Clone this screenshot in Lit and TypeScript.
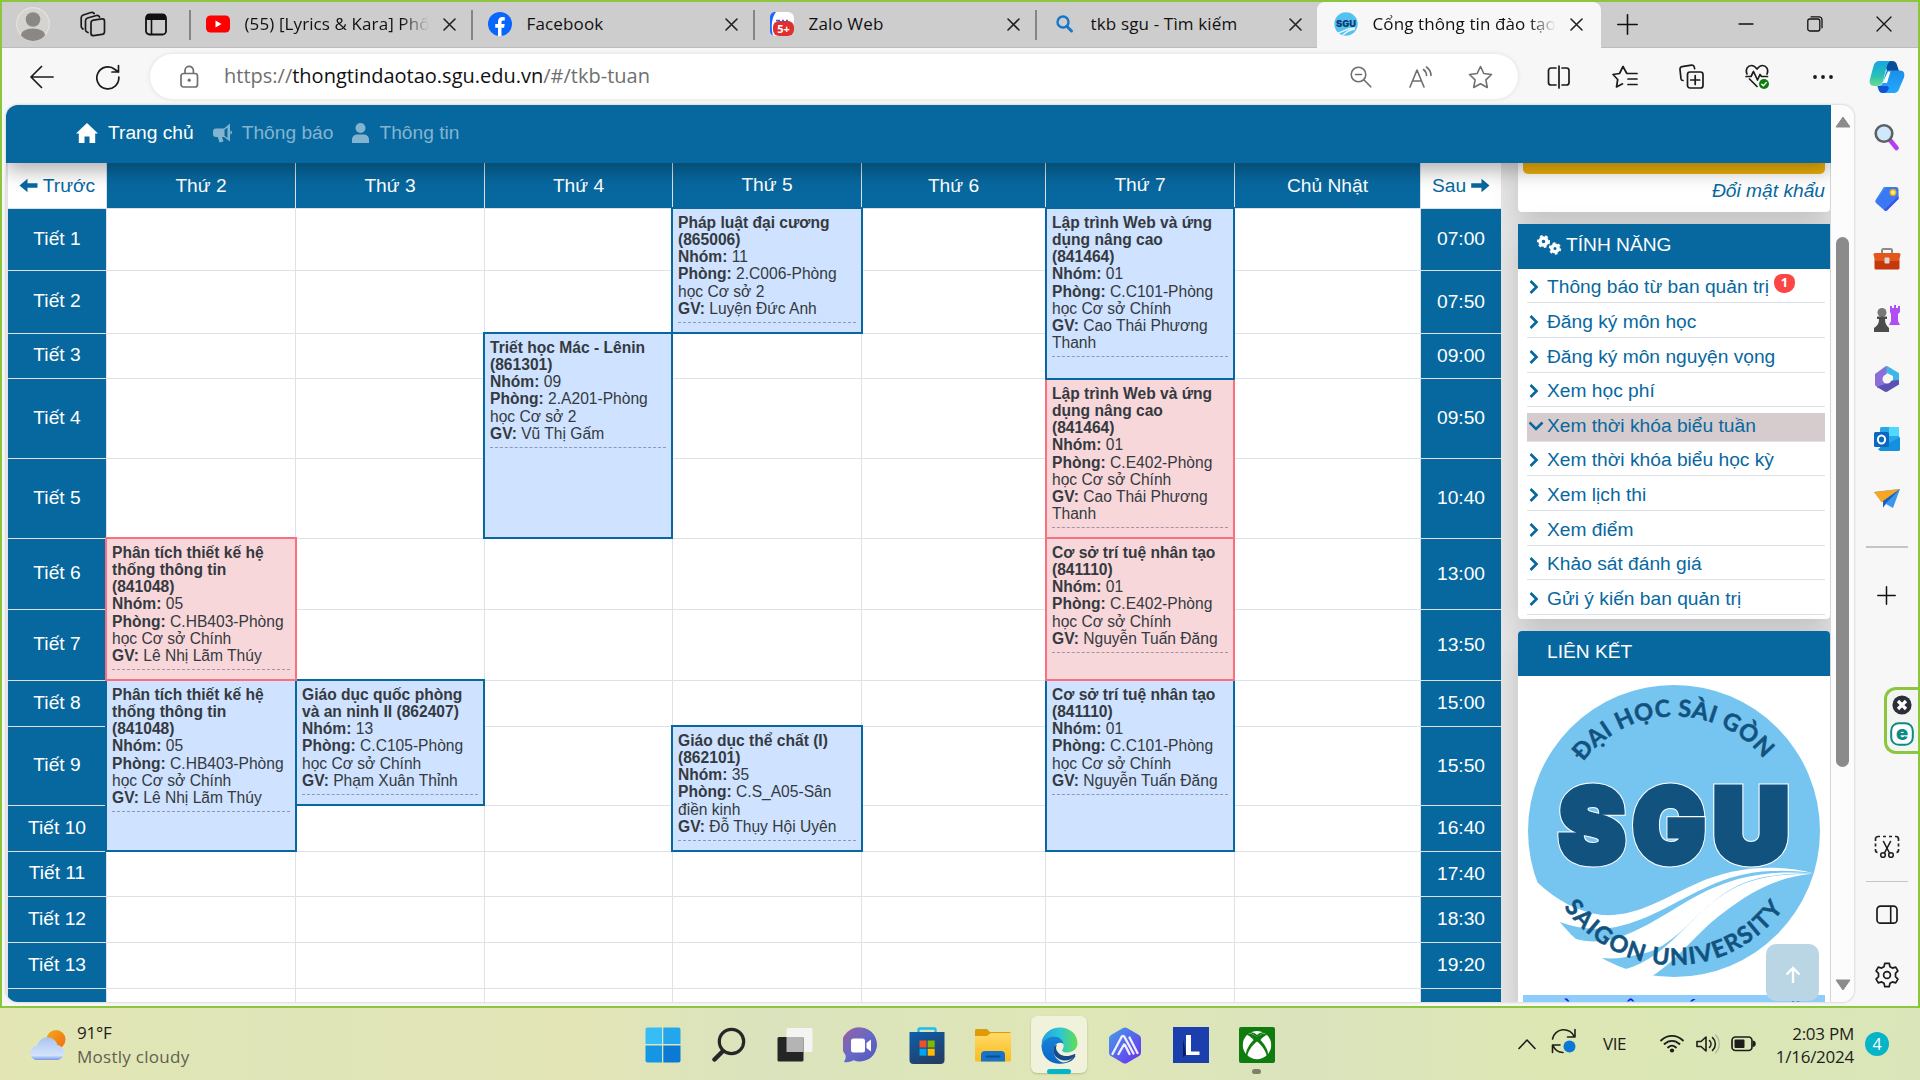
import { LitElement, html, svg, css, nothing } from "lit";
import { customElement } from "lit/decorators.js";
import { classMap } from "lit/directives/class-map.js";
import { styleMap } from "lit/directives/style-map.js";

const icon = (w: number, h: number, body: unknown) =>
  html`<svg width=${w} height=${h} viewBox="0 0 ${w} ${h}" fill="none">${body}</svg>`;
const line = (d: string, c = "#1b1b1b", sw = 1.6) =>
  svg`<path d=${d} stroke=${c} stroke-width=${sw} stroke-linecap="round" stroke-linejoin="round" />`;

const closeIcon = icon(13, 13, line("M1 1L12 12M12 1L1 12", "#222", 1.6));

const favicons: Record<string, unknown> = {
  youtube: icon(24, 24, svg`<rect x="0" y="3.500" width="24" height="17" rx="4.500" fill="#f00"/><path d="M9.500 8.500v7l6-3.500z" fill="#fff"/>`),
  facebook: icon(24, 24, svg`<circle cx="12" cy="12" r="12" fill="#0866ff"/><path d="M10 24v-8.300H7.200v-3.700H10V9.800C10 6.600 11.500 5 14.600 5c.8 0 1.600.1 2.200.3v3.200h-1.600c-1.400 0-1.700.7-1.700 1.900V12h3.200l-.6 3.700h-2.600V24z" fill="#fff"/>`),
  zalo: icon(24, 24, svg`<rect width="24" height="24" rx="6" fill="#fff"/><path d="M6 0H5a5 5 0 00-5 5v14a5 5 0 003 4.600C1 17 1 6 6 0z" fill="#1668ff"/><path d="M6 8.500h4M12 8.500h2M16 8.500h2" stroke="#1668ff" stroke-width="1.500"/><rect x="3" y="9" width="21" height="15" rx="6" fill="#df2f2f"/><text x="13.500" y="20.500" font-size="11" font-weight="700" fill="#fff" text-anchor="middle" font-family="Open Sans, sans-serif">5+</text>`),
  search: icon(24, 24, svg`<circle cx="11" cy="10" r="5.500" stroke="#1677c9" stroke-width="2.400"/><path d="M15 14.500l4.500 4.500" stroke="#1677c9" stroke-width="3" stroke-linecap="round"/>`),
  sgu: icon(24, 24, svg`<circle cx="12" cy="12" r="11.700" fill="#55c1ef"/><path d="M4 21c5-1 8-5 17-5M9 23c3-3 6-5 12-6" stroke="#e9f8ff" stroke-width="1.300"/><text x="12" y="14.800" font-size="9" font-weight="900" fill="#0b3a76" text-anchor="middle" textLength="20" lengthAdjust="spacingAndGlyphs" font-family="Inter, sans-serif">SGU</text>`),
};

const tabs = [
  { icon: "youtube", title: "(55) [Lyrics & Kara] Phố", fade: true },
  { icon: "facebook", title: "Facebook" },
  { icon: "zalo", title: "Zalo Web" },
  { icon: "search", title: "tkb sgu - Tìm kiếm" },
  { icon: "sgu", title: "Cổng thông tin đào tạo", fade: true, active: true },
];

const days = ["Thứ 2", "Thứ 3", "Thứ 4", "Thứ 5", "Thứ 6", "Thứ 7", "Chủ Nhật"];
const hours = ["07:00", "07:50", "09:00", "09:50", "10:40", "13:00", "13:50", "15:00", "15:50", "16:40", "17:40", "18:30", "19:20", ""];

interface Course {
  day: number; from: number; span: number; pink?: boolean; over?: boolean;
  name: string[]; group: string; room: string[]; teacher: string[];
}
const courses: Course[] = [
  { day: 2, from: 6, span: 2, pink: true, over: true, name: ["Phân tích thiết kế hệ", "thống thông tin", "(841048)"], group: "05", room: ["C.HB403-Phòng", "học Cơ sở Chính"], teacher: ["Lê Nhị Lãm Thúy"] },
  { day: 2, from: 8, span: 3, name: ["Phân tích thiết kế hệ", "thống thông tin", "(841048)"], group: "05", room: ["C.HB403-Phòng", "học Cơ sở Chính"], teacher: ["Lê Nhị Lãm Thúy"] },
  { day: 3, from: 8, span: 2, name: ["Giáo dục quốc phòng", "và an ninh II (862407)"], group: "13", room: ["C.C105-Phòng", "học Cơ sở Chính"], teacher: ["Phạm Xuân Thỉnh"] },
  { day: 4, from: 3, span: 3, name: ["Triết học Mác - Lênin", "(861301)"], group: "09", room: ["2.A201-Phòng", "học Cơ sở 2"], teacher: ["Vũ Thị Gấm"] },
  { day: 5, from: 1, span: 2, name: ["Pháp luật đại cương", "(865006)"], group: "11", room: ["2.C006-Phòng", "học Cơ sở 2"], teacher: ["Luyện Đức Anh"] },
  { day: 5, from: 9, span: 2, name: ["Giáo dục thể chất (I)", "(862101)"], group: "35", room: ["C.S_A05-Sân", "điền kinh"], teacher: ["Đỗ Thụy Hội Uyên"] },
  { day: 7, from: 1, span: 3, over: true, name: ["Lập trình Web và ứng", "dụng nâng cao", "(841464)"], group: "01", room: ["C.C101-Phòng", "học Cơ sở Chính"], teacher: ["Cao Thái Phương", "Thanh"] },
  { day: 7, from: 4, span: 2, pink: true, name: ["Lập trình Web và ứng", "dụng nâng cao", "(841464)"], group: "01", room: ["C.E402-Phòng", "học Cơ sở Chính"], teacher: ["Cao Thái Phương", "Thanh"] },
  { day: 7, from: 6, span: 2, pink: true, over: true, name: ["Cơ sở trí tuệ nhân tạo", "(841110)"], group: "01", room: ["C.E402-Phòng", "học Cơ sở Chính"], teacher: ["Nguyễn Tuấn Đăng"] },
  { day: 7, from: 8, span: 3, name: ["Cơ sở trí tuệ nhân tạo", "(841110)"], group: "01", room: ["C.C101-Phòng", "học Cơ sở Chính"], teacher: ["Nguyễn Tuấn Đăng"] },
];

const features = [
  "Thông báo từ ban quản trị", "Đăng ký môn học", "Đăng ký môn nguyện vọng", "Xem học phí",
  "Xem thời khóa biểu tuần", "Xem thời khóa biểu học kỳ", "Xem lịch thi", "Xem điểm",
  "Khảo sát đánh giá", "Gửi ý kiến ban quản trị",
];

const multiline = (parts: string[]) => parts.map((p, i) => html`${i ? html`<br />` : nothing}${p}`);

@customElement("week-timetable")
class WeekTimetable extends LitElement {
  static styles = css`
    :host { display: block; width: 1493px; background: #fff; color: #fff; font: 19.2px/28px "Liberation Sans", Arial, sans-serif; }
    .grid { display: grid; grid-template-columns: 99px 189px 189px 188px 189px 184px 189px 186px 80px;
      grid-template-rows: 46px 62px 63px 45px 80px 80px 71px 71px 46px 79px 46px 45px 46px 46px 46px; }
    .cell { box-sizing: border-box; border-right: 1px solid #dee2e6; border-bottom: 1px solid #dee2e6; }
    .head { background: #07689f; display: flex; align-items: center; justify-content: center; white-space: nowrap; }
    .last { border-right: 0; }
    .raised { padding-bottom: 2px; }
    .hour { padding-bottom: 1px; }
    .nav { background: #fff; color: #07689f; gap: 5px; }
    .course { box-sizing: border-box; border: 2px solid #07689f; background: #cfe2ff; color: #343a40; padding: 5px;
      margin: -2px 0 0 -2px; font-size: 15.600px; line-height: 17.160px; white-space: nowrap; overflow: hidden; position: relative; }
    .pink { background: #f8d7da; border-color: #fa7080; }
    .over { z-index: 1; }
    .wide { margin-right: -1px; }
    .shift { margin-left: -1px; }
    .low { margin-bottom: -1px; }
    .down { margin-top: -1px; }
    .info { border-bottom: 1px dashed rgba(80, 80, 110, 0.5); padding-bottom: 5px; }
  `;
  render() {
    return html`<div class="grid">
      <div class="cell head nav">${icon(19, 15, svg`<path d="M.5 7.500L8.500.8v4.500h10v4.400h-10v4.500z" fill="#07689f"/>`)}<span>Trước</span></div>
      ${days.map((d, i) => html`<div class=${classMap({ cell: true, head: true, raised: i === 3 || i === 5 })}>${d}</div>`)}
      <div class="cell head nav last"><span>Sau</span>${icon(19, 15, svg`<path d="M18.500 7.500L10.500.8v4.500H.2v4.400h10.300v4.500z" fill="#07689f"/>`)}</div>
      ${hours.map((h, r) => html`
        <div class="cell head raised" style=${styleMap({ gridRow: `${r + 2}`, gridColumn: "1" })}>Tiết ${r + 1}</div>
        ${days.map((_, c) => html`<div class="cell" style=${styleMap({ gridRow: `${r + 2}`, gridColumn: `${c + 2}` })}></div>`)}
        <div class="cell head last hour" style=${styleMap({ gridRow: `${r + 2}`, gridColumn: "9" })}>${h}</div>`)}
      ${courses.map((c) => html`
        <div class=${classMap({ course: true, pink: !!c.pink, over: !!c.over, wide: c.day === 2 || c.day === 5, shift: c.day === 3 || c.day === 7, low: c.day === 7 && c.from === 1, down: c.from === 4 })}
          style=${styleMap({ gridColumn: `${c.day}`, gridRow: `${c.from + 1} / span ${c.span}` })}>
          <div class="info"><b>${multiline(c.name)}</b><br /><b>Nhóm:</b> ${c.group}<br /><b>Phòng:</b> ${multiline(c.room)}<br /><b>GV:</b> ${multiline(c.teacher)}</div>
        </div>`)}
    </div>`;
  }
}

@customElement("sgu-logo")
class SguLogo extends LitElement {
  static styles = css`
    :host { display: block; width: 292px; height: 293px; }
    .arc { font-family: Lato, "Open Sans", sans-serif; font-weight: 700; font-size: 23.500px; fill: #12527f; stroke: #12527f; stroke-width: 0.5; stroke-linejoin: round; }
    .big { font-family: Inter, "Open Sans", sans-serif; font-weight: 900; font-size: 102px; fill: #12527f; }
    .halo { stroke: #fff; stroke-width: 9; }
    .core { stroke: #12527f; stroke-width: 7; }
  `;
  render() {
    const letters = [["S", 31, 66], ["G", 105, 72], ["U", 185, 76]] as const;
    return html`<svg width="292" height="293" viewBox="0 0 292 293">
      <circle cx="146" cy="146" r="146" fill="#76c5f0" />
      <path fill="#fff" d="M-4 190L10 198C30 216 50 227 74 230C110 232 135 213 172 197C200 185 240 177 285 188C245 183 215 187 188 198C150 214 125 234 88 242C68 246 48 243 32 237L20 260L-6 230z" />
      <path fill="#fff" d="M48 254C62 258 78 257 95 251C128 239 160 212 190 201C215 190 250 185 285 188.500C250 188 222 192 200 206C165 228 145 266 108 270C96 273 85 274 74 273L40 276z" />
      <path fill="#fff" d="M98 284C140 272 160 232 196 209C222 192 250 189 285 188.800C250 192 225 205 195 228C168 248 150 275 124 291L100 296z" />
      ${letters.map(([l, x, w]) => svg`<text class="big halo" x=${x} y="176.500" textLength=${w} lengthAdjust="spacingAndGlyphs">${l}</text>`)}
      ${letters.map(([l, x, w]) => svg`<text class="big core" x=${x} y="176.500" textLength=${w} lengthAdjust="spacingAndGlyphs">${l}</text>`)}
      <path id="top" d="M55 77A114.500 114.500 0 0 1 238 77" fill="none" />
      <path id="bottom" d="M36 222A133.500 133.500 0 0 0 257 221" fill="none" />
      <text class="arc"><textPath href="#top" textLength="208">ĐẠI HỌC SÀI GÒN</textPath></text>
      <text class="arc"><textPath href="#bottom" textLength="257">SAIGON UNIVERSITY</textPath></text>
    </svg>`;
  }
}

@customElement("portal-side")
class PortalSide extends LitElement {
  static styles = css`
    :host { display: block; box-sizing: border-box; width: 330px; padding: 0 1px 0 17px; background: #e6e6e6; font: 19.2px/28px "Liberation Sans", Arial, sans-serif; color: #07689f; }
    .card { background: #fff; box-shadow: 0 8px 28px rgba(0, 0, 0, 0.17); box-sizing: border-box; }
    .account { height: 49px; border-radius: 0 0 4px 4px; padding: 0 5px; text-align: right; font-style: italic; }
    .button { height: 11px; background: #f0b20a; border-radius: 0 0 5px 5px; margin-bottom: 3px; }
    .features { margin-top: 12px; height: 395px; border-radius: 0 0 4px 4px; }
    .title { height: 45px; background: #07689f; color: #fff; display: flex; align-items: center; padding: 0 0 4px 19px; box-sizing: border-box; gap: 4px; }
    .links .title { border-radius: 4px 4px 0 0; padding-left: 29px; padding-bottom: 3px; }
    .list { display: grid; grid-template-rows: 34px 35px 35px 34px 35px 34px 35px 35px 34px 35px; padding: 0 5px 0 9px; }
    .row { display: flex; flex-direction: column; justify-content: flex-end; }
    .item { height: 26px; display: flex; align-items: center; border-bottom: 1px solid #dee2e6; padding: 0 0 2px 2px; white-space: nowrap; }
    .item svg { width: 18px; flex: none; }
    .current { background: #d6cccd; }
    .badge { align-self: flex-start; width: 21px; height: 19px; margin: 0 0 0 5px; border-radius: 8px 8px 10px 10px; background: #fc4545; color: #fff; font: 700 13px/16px "Open Sans", sans-serif; text-align: center; }
    .links { margin-top: 12px; height: 380px; border-radius: 4px 4px 0 0; }
    .pic { padding: 9px 0 17px 10px; }
    .banner { margin: 0 5px; height: 28px; background: #8ccdfb; color: #1414f0; font: 700 19.500px/30px "Liberation Sans", Arial, sans-serif; text-align: center; white-space: nowrap; }
  `;
  render() {
    const gear = (cx: number, cy: number, r: number) => svg`<circle cx=${cx} cy=${cy} r=${r} stroke="#fff" stroke-width="3.400"/><circle cx=${cx} cy=${cy} r=${r + 2} stroke="#fff" stroke-width="2" stroke-dasharray="2.700 2.700"/>`;
    return html`
      <div class="card account"><div class="button"></div>Đổi mật khẩu</div>
      <div class="card features">
        <div class="title">${icon(25, 20, svg`${gear(6.5, 6.5, 3.5)}${gear(18, 13.5, 3.2)}`)}<span>TÍNH NĂNG</span></div>
        <div class="list">${features.map((f, i) => html`<div class="row"><div class=${classMap({ item: true, current: i === 4 })}>
          ${i === 4
            ? icon(18, 14, svg`<path d="M.5 3.500l6.500 6.500 6.500-6.500" stroke="#07689f" stroke-width="2.600"/>`)
            : icon(18, 14, svg`<path d="M1.500 1l6 6-6 6" stroke="#07689f" stroke-width="2.700"/>`)}
          <span>${f}</span>${i === 0 ? html`<span class="badge">1</span>` : nothing}</div></div>`)}</div>
      </div>
      <div class="card links">
        <div class="title">LIÊN KẾT</div>
        <div class="pic"><sgu-logo></sgu-logo></div>
        <div class="banner">PHÒNG CÔNG TÁC SINH VIÊN</div>
      </div>`;
  }
}

const railTop = [
  icon(28, 28, svg`<path d="M17 17l6.500 8" stroke="#b63df0" stroke-width="4.500" stroke-linecap="round"/><circle cx="11" cy="10.500" r="8.300" fill="#cfe9fa" stroke="#5d6166" stroke-width="2.600"/>`),
  icon(28, 28, svg`<path d="M11 3h12a2.500 2.500 0 012.500 2.500V15L14.500 26a2.500 2.500 0 01-3.500 0L3 19a2.500 2.500 0 010-3.500z" fill="#3b78f3"/><path d="M3 17l8-14h2z" fill="#2f9bf7"/><path d="M25.500 12v3L14.500 26a2.500 2.500 0 01-3.500 0z" fill="#3c55e6"/><circle cx="20" cy="8.500" r="2.700" fill="#fff3a0" stroke="#f2b705" stroke-width="1.500"/>`),
  icon(28, 28, svg`<path d="M9 8V5.500A1.500 1.500 0 0110.500 4h7A1.500 1.500 0 0119 5.500V8" stroke="#8d8b88" stroke-width="2"/><rect x="1.500" y="14" width="25" height="10.500" rx="1.500" fill="#c4390b"/><path d="M.5 9.500A1.500 1.500 0 012 8h24a1.500 1.500 0 011.500 1.500L26 16H2z" fill="#e4561b"/><rect x="11.500" y="12.500" width="5" height="6" rx="1" fill="#d9d9d9"/>`),
  icon(28, 28, svg`<path d="M17 1h2v2h2V0h2v3h2V1h2v6l-2 2v7l2 4H16l2-4V9l-1-2z" fill="#b24df5"/><circle cx="9" cy="7.500" r="4.500" fill="#777"/><path d="M4 11.500h10v2.500h-2c0 4 1 6 4 9v4H1v-4c4-3 5-5 5-9H4z" fill="#4c4c4c"/>`),
  icon(28, 28, svg`<path d="M13 1l6 3-6 5v10l-8 4-3-3V9z" fill="#8a6fd8"/><path d="M14 1l11 6.500c1 .5 1 1 1 2V17l-6-1V11L13 7.500z" fill="#3fb6e8"/><path d="M26 15v4.500l-11.500 7c-.5.500-2 .5-3 0L4 22l9-3.500 6-3z" fill="#5b51b5"/><circle cx="14" cy="14" r="4.500" fill="#f7f7f7"/>`),
  icon(28, 28, svg`<rect x="7" y="2" width="19" height="22" rx="1.500" fill="#28a8ea"/><path d="M16 2h10v9H16z" fill="#50d9ff"/><path d="M5 24l22-12v12.500A1.500 1.500 0 0125.500 26H7z" fill="#1490df"/><rect x="1" y="7" width="15" height="15" rx="1.500" fill="#0c67c0"/><ellipse cx="8.500" cy="14.500" rx="3.600" ry="4" stroke="#fff" stroke-width="2"/>`),
  icon(28, 28, svg`<path d="M1 7l26-3-7 19-7-4-3 3.500V16z" fill="#3b97ee"/><path d="M1 7l26-3L8.500 17.500z" fill="#f5a623"/><path d="M27 4L10 16v6.500L13 18z" fill="#1c5fb8"/>`),
];

@customElement("edge-rail")
class EdgeRail extends LitElement {
  static styles = css`
    :host { display: flex; flex-direction: column; align-items: center; width: 63px; background: #f7f7f7; padding-top: 2px; box-sizing: border-box; }
    .slot { height: 60px; width: 60px; display: flex; align-items: center; justify-content: center; flex: none; }
    .tall { height: 61px; padding-top: 1px; box-sizing: border-box; }
    .line { width: 42px; height: 2px; background: #c5c5c5; flex: none; }
    .first { margin-top: 17px; margin-bottom: 17px; }
    .second { height: 1px; margin-top: 4px; margin-bottom: 3px; }
    .widget { align-self: flex-end; width: 34px; height: 67px; margin: 62px 0 63px; box-sizing: border-box; border: 3px solid #8cc63f; border-right: 0; border-radius: 12px 0 0 12px; display: flex; flex-direction: column; align-items: center; justify-content: center; gap: 7px; padding-right: 1px; flex: none; background: #f3f5f3; }
  `;
  render() {
    return html`
      ${railTop.map((i, n) => html`<div class=${classMap({ slot: true, tall: n === 2 || n === 1 })}>${i}</div>`)}
      <div class="line first"></div>
      <div class="slot">${icon(19, 19, line("M9.500 .8v17.400M.8 9.500h17.400", "#111", 1.5))}</div>
      <div class="widget">
        ${icon(20, 20, svg`<circle cx="10" cy="10" r="9.600" fill="#2b3038"/><path d="M6 6l8 8M14 6l-8 8" stroke="#fff" stroke-width="3.200"/>`)}
        ${icon(24, 24, svg`<rect x="1.200" y="1.200" width="21.600" height="21.600" rx="7.500" fill="#fff" stroke="#0b8a86" stroke-width="2"/><text x="12" y="18" font-size="20" font-weight="900" fill="#0b8a86" text-anchor="middle" font-family="Inter, sans-serif">e</text>`)}
      </div>
      <div class="slot">${icon(26, 24, svg`<path d="M1.500 6V4A2.500 2.500 0 014 1.500h2M9 1.500h3M15 1.500h3M21 1.500h1A2.500 2.500 0 0124.500 4v2M24.500 8.500v3M24.500 14v1a2.500 2.500 0 01-2 2.500M1.500 8.500v3M1.500 14v1a2.500 2.500 0 002 2.500" stroke="#222" stroke-width="1.700"/>${line("M9.500 6.500l6 11.500M16.500 6.500L10.500 18")}<circle cx="9" cy="20" r="2.300" stroke="#222" stroke-width="1.600"/><circle cx="17" cy="20" r="2.300" stroke="#222" stroke-width="1.600"/>`)}</div>
      <div class="line second"></div>
      <div class="slot">${icon(22, 20, svg`<rect x="1" y="1.200" width="20" height="17" rx="3.500" stroke="#1b1b1b" stroke-width="1.700"/><path d="M14.700 1.500v17" stroke="#1b1b1b" stroke-width="1.600"/>`)}</div>
      <div class="slot">${icon(26, 26, svg`<circle cx="13" cy="13" r="3.400" stroke="#1b1b1b" stroke-width="1.700"/><path d="M10.800 1.300h4.400l.8 3.400 2.400 1.400 3.300-1 2.200 3.800L21.500 11.300v3.400l2.400 2.400-2.200 3.800-3.300-1-2.400 1.400-.8 3.400h-4.400l-.8-3.400-2.400-1.400-3.300 1-2.200-3.800 2.400-2.400v-3.400L2.100 8.900l2.200-3.800 3.300 1L10 4.700z" stroke="#1b1b1b" stroke-width="1.700" stroke-linejoin="round"/>`)}</div>
    `;
  }
}

const heart = svg`${line("M2 10C0 5 3 1.500 6.500 1.500c2.500 0 4 1.500 5.500 3.500C13.500 3 15 1.500 17.500 1.500 21 1.500 24 5 22 10M4.500 15L12 22.500", "#1b1b1b", 1.7)}${line("M1 12.500h5l2.500-5 4 8.500 2.500-5.500 1.500 2h6", "#1b1b1b", 1.7)}<circle cx="19" cy="20" r="5" fill="#0f7b0f"/>${line("M16.800 20.200l1.600 1.600 2.800-3.200", "#fff", 1.4)}`;

const taskIcons = [
  icon(36, 36, svg`<path d="M.5 2.500a2 2 0 012-2H17v16.500H.5z" fill="#36bdf6"/><path d="M18.300.5h15.200a2 2 0 012 2V17H18.300z" fill="#22a7ec"/><path d="M.5 18.500H17V35.500H2.500a2 2 0 01-2-2z" fill="#1496e4"/><path d="M18.300 18.500h17.200v15a2 2 0 01-2 2H18.300z" fill="#0a7ad4"/>`),
  icon(34, 36, svg`<circle cx="19.500" cy="14.500" r="12.200" stroke="#262626" stroke-width="3.200"/><path d="M10.500 24.500l-8 8" stroke="#262626" stroke-width="4.500" stroke-linecap="round"/>`),
  icon(36, 36, svg`<rect x="9.500" y="1" width="26" height="24" rx="1.500" fill="#f4f4f2"/><rect x=".5" y="10" width="26" height="24.500" rx="1.500" fill="#252525"/><rect x="9.500" y="10" width="17" height="15" fill="#b4b4b4"/>`),
  icon(36, 36, svg`<defs><linearGradient id="chat" x1="0" x2="1" y1="0" y2="1"><stop stop-color="#9e5f9c"/><stop offset=".5" stop-color="#6669c6"/><stop offset="1" stop-color="#5356bd"/></linearGradient></defs><path d="M18 .5a17 17 0 11-7.500 32.700C7 35 4 35.500 1 35c1.500-2.500 2-4.500 1.500-7A17 17 0 0118 .5z" fill="url(#chat)"/><rect x="8" y="11.500" width="14" height="14" rx="2.500" fill="#fff"/><path d="M23.500 16l4.500-3.500v12L23.500 21z" fill="#fff"/>`),
  icon(36, 37, svg`<path d="M9.500 7V2.500a1 1 0 011-1h15a1 1 0 011 1V7" stroke="#1ebcf4" stroke-width="2.300"/><path d="M.5 5h35v28a4 4 0 01-4 4h-27a4 4 0 01-4-4z" fill="url(#store)"/><defs><linearGradient id="store" x1="0" x2=".5" y1="0" y2="1"><stop stop-color="#0d5fae"/><stop offset="1" stop-color="#233f66"/></linearGradient></defs><path d="M10.500 13.500h7v7h-7z" fill="#f25022"/><path d="M18.700 13.500h7v7h-7z" fill="#7fba00"/><path d="M10.500 21.700h7v7h-7z" fill="#00a4ef"/><path d="M18.700 21.700h7v7h-7z" fill="#ffb900"/>`),
  icon(36, 34, svg`<path d="M0 2.500A1.500 1.500 0 011.500 1H12l3 3h19.500A1.500 1.500 0 0136 5.500V12H0z" fill="#dd9b08"/><path d="M0 8h12l4-3h20v27a1.500 1.500 0 01-1.500 1.500h-33A1.500 1.500 0 010 32z" fill="url(#fold)"/><defs><linearGradient id="fold" x1="0" x2="0" y1="0" y2="1"><stop stop-color="#ffd968"/><stop offset="1" stop-color="#fbbd1b"/></linearGradient></defs><path d="M6 33.500V27a4 4 0 014-4h16a4 4 0 014 4v6.500z" fill="#1573c8"/><path d="M11.500 28.500h13" stroke="#0b4f93" stroke-width="2" stroke-linecap="round"/>`),
  icon(37, 37, svg`<defs><linearGradient id="e1" x1="0" x2="1"><stop stop-color="#22a2e0"/><stop offset=".5" stop-color="#2cc6d4"/><stop offset="1" stop-color="#63dd52"/></linearGradient><linearGradient id="e2" x1="0" x2="0" y1="0" y2="1"><stop stop-color="#1583d8"/><stop offset="1" stop-color="#0b66c3"/></linearGradient></defs><path d="M1 13C4 5 11 .5 19 .5 29 .5 36.500 7.500 36.500 16c0 6-5 9.500-10 9.500-4.500 0-6.500-1.500-4.500-4 1.500-2 1-9-8-9.500C8.500 11.500 4 13 .7 17z" fill="url(#e1)"/><path d="M.5 18C3 12 9 9.500 14 9.800c5 .4 8 4 8.500 7-4-3-10 0-10 6.500 0 7 6 13 13 12.500-9 3-25-.5-25-17.800z" fill="url(#e2)"/><path d="M13 20c-3 7 4 13.500 11 13.500 4 0 8-2 10-5 1-1.300 0-1.800-1-1.300-7 3.500-14.500 1.500-17-3.200C14.500 21.500 15 19.500 16 17.500c-1.500.5-2.500 1.500-3 2.500z" fill="#164a8b"/><path d="M33.500 28.500C30 34 25 36 20 36c8 .8 12.500-3 14.500-7z" fill="#114a8b"/>`),
  icon(36, 37, svg`<defs><linearGradient id="ai" x1="0" x2="1" y1="0" y2="1"><stop stop-color="#45a0e8"/><stop offset="1" stop-color="#6a2cf2"/></linearGradient></defs><path d="M16 1a4 4 0 014 0l12 7a4 4 0 012 3.500v14a4 4 0 01-2 3.500l-12 7a4 4 0 01-4 0L4 29a4 4 0 01-2-3.500v-14A4 4 0 014 8z" fill="url(#ai)"/><path d="M5.500 27l9-17c.8-1.500 2.200-1.500 3 0l9 16.500M11.500 27l5.500-9.500M18 18l4.500 9M22.500 10.500l8 15.500" stroke="#f3f0ff" stroke-width="2.300" stroke-linecap="round" stroke-linejoin="round"/>`),
  icon(36, 36, svg`<rect width="36" height="36" fill="#1c3fae"/><path d="M13 28l-3 2V12z" fill="#0a1c50"/><path d="M13 8h5v16.500h8.500V28H13z" fill="#fff"/>`),
  icon(36, 36, svg`<rect width="36" height="36" rx="2" fill="#107c10"/><circle cx="18" cy="18" r="14.200" fill="#fff"/><path d="M9 6.500c3-1 6.500 1.500 9 3.500 2.500-2 6-4.500 9-3.500L31 2H5z" fill="#107c10"/><path d="M10.500 6.500c-2 0-3 1-3 1s4 1.500 7 5.500C9 19 6.500 24 7 29l1 1c1-6 5-11.500 10-15.500C23 18.500 27 24 28 30l1-1c.5-5-2-10-7.500-16 3-4 7-5.500 7-5.500s-1-1-3-1S20.500 8 18 9.800C15.500 8 12.500 6.500 10.500 6.500z" fill="#107c10"/><path d="M11 6c3-1.200 5 .5 7 2 2-1.500 4-3.200 7-2-4-2.700-10-2.700-14 0z" fill="#fff"/>`),
];

@customElement("task-bar")
class TaskBar extends LitElement {
  static styles = css`
    :host { display: flex; height: 72px; background: linear-gradient(90deg, #e3e6b4 0%, #dfe5b8 14%, #e3e5b6 30%, #dae3bd 40%, #dfe6b6 56%, #dbe3bd 68%, #dde7b4 80%, #dae6b9 100%);
      font: 17px/24px "Open Sans", "Noto Sans", sans-serif; color: #1d1d1b; white-space: nowrap; }
    .weather { width: 600px; box-sizing: border-box; padding: 2px 0 0 30px; display: flex; gap: 11px; align-items: center; }
    .text { letter-spacing: -0.25px; }
    .muted { color: #5f614e; letter-spacing: 0.28px; }
    .apps { display: flex; margin-left: 30px; }
    .app { width: 66px; display: flex; align-items: center; justify-content: center; position: relative; }
    .app svg { display: block; margin-top: 2px; }
    .tile { width: 56px; height: 57px; display: flex; align-items: center; justify-content: center; margin-top: 1px; border-radius: 6px; background: #f0f2db; box-shadow: 0 1px 2px rgba(90, 90, 40, 0.3); }
    .mark { position: absolute; left: 21px; top: 61px; width: 24px; height: 5px; border-radius: 3px; background: #04b5c8; }
    .dot { left: 28px; width: 9px; background: #7e816a; }
    .tray { display: flex; align-items: center; margin-left: auto; width: 402px; }
    .tray svg { flex: none; }
    .vie { width: 25px; margin: 0 32px 0 26px; letter-spacing: -0.5px; }
    .gap { width: 12px; flex: none; }
    .narrow { width: 11px; flex: none; }
    .sync { margin-left: 15px; }
    .time { text-align: right; width: 98px; line-height: 23px; letter-spacing: -0.25px; margin-right: 11px; padding-top: 1px; }
    .count { width: 24px; height: 24px; border-radius: 50%; background: #04b5c8; color: #fff; text-align: center; line-height: 24px; font-size: 16px; }
  `;
  render() {
    return html`
      <div class="weather">
        ${icon(36, 32, svg`<defs><linearGradient id="cl" x1="0" x2="0" y1="0" y2="1"><stop stop-color="#a9c3f0"/><stop offset=".8" stop-color="#d5e3fb"/><stop offset="1" stop-color="#6f99e8"/></linearGradient><linearGradient id="sn" x1="0" x2="1" y1="0" y2="1"><stop stop-color="#f4a91b"/><stop offset="1" stop-color="#ee6b12"/></linearGradient></defs><circle cx="26" cy="10.500" r="9.500" fill="url(#sn)"/><path d="M7.500 31a7 7 0 01-.5-14A10.500 10.500 0 0127.500 16a7.600 7.600 0 01.5 15z" fill="url(#cl)"/>`)}
        <div class="text"><div>91°F</div><div class="muted">Mostly cloudy</div></div>
      </div>
      <div class="apps">${taskIcons.map((t, i) => html`<div class="app">${i === 6 ? html`<div class="tile">${t}</div><div class="mark"></div>` : t}${i === 9 ? html`<div class="mark dot"></div>` : nothing}</div>`)}</div>
      <div class="tray">
        ${icon(18, 12, line("M1 10.500L9 2l8 8.500"))}
        <span class="sync">${icon(26, 26, svg`${line("M1.500 11A11.500 11.500 0 0123.500 9M24 1.500V9h-7.500M1.500 24.500V17H9M2 17.500A11 11 0 0012 24.500", "#1d1d1b", 1.6)}<circle cx="18.500" cy="18.500" r="6" fill="#0a78d6"/>`)}</span>
        <span class="vie">VIE</span>
        ${icon(24, 20, svg`${line("M1 6.500C7.500.3 16.500.3 23 6.500M4.500 10c4.500-4.300 10.500-4.300 15 0M8 13.500c2.500-2.300 5.500-2.300 8 0", "#1d1d1b", 1.8)}<circle cx="12" cy="16.500" r="2.100" fill="#1d1d1b"/>`)}
        <span class="gap"></span>
        ${icon(24, 20, svg`${line("M1 7.500v5h4l5 4.500V3L5 7.500zM13.500 6.500c2 2 2 5 0 7M16.500 3.500c3.800 3.700 3.800 9.300 0 13", "#1d1d1b", 1.6)}${line("M19.500 1c5 5 5 13 0 18", "#b3b99a", 1.4)}`)}
        <span class="narrow"></span>
        ${icon(25, 18, svg`<rect x="1" y="2" width="20" height="13.500" rx="3.500" stroke="#1d1d1b" stroke-width="1.700"/><rect x="3.500" y="4.500" width="10" height="8.500" rx="1" fill="#1d1d1b"/><path d="M22.500 6v5.500c1 0 1.700-.8 1.700-2.700S23.500 6 22.500 6z" fill="#1d1d1b" stroke="#1d1d1b"/>`)}
        <div class="time">2:03 PM<br />1/16/2024</div>
        <div class="count">4</div>
      </div>`;
  }
}

@customElement("app-root")
class AppRoot extends LitElement {
  static styles = css`
    :host { display: block; width: 1920px; height: 1080px; overflow: hidden; font-family: "Open Sans", "Noto Sans", sans-serif; }
    svg { display: block; flex: none; }
    .window { box-sizing: border-box; width: 1920px; height: 1008px; border: 2px solid #8cc63f; background: #f7f7f7; display: flex; flex-direction: column; }
    .strip { height: 46px; background: #cdcdcd; display: flex; box-shadow: inset 0 -1px 0 #bcbcbc; flex: none; }
    .tools { width: 188px; display: flex; align-items: center; padding-left: 14px; box-sizing: border-box; padding-bottom: 2px; }
    .tools svg:nth-child(2) { margin-left: 30px; }
    .tools svg:nth-child(3) { margin-left: 39px; }
    .tab { width: 282px; box-sizing: border-box; display: flex; align-items: center; padding: 0 15px 2px; font-size: 17px; color: #111; white-space: nowrap; flex: none; }
    .tab::before { content: ""; width: 2px; height: 30px; background: #858585; margin-left: -15px; margin-right: 15px; flex: none; margin-top: 2px; }
    .tab span { flex: 1; overflow: hidden; margin: 0 -8px 2px 14.500px; letter-spacing: 0.15px; }
    .tab .fade { -webkit-mask-image: linear-gradient(90deg, #000 84%, transparent 99%); mask-image: linear-gradient(90deg, #000 84%, transparent 99%); margin-right: 12px; letter-spacing: 0.1px; }
    .active { width: 284px; background: #f7f7f7; border-radius: 8px 8px 0 0; padding-left: 17px; padding-right: 18px; }
    .active::before { display: none; }
    .controls { display: flex; align-items: center; padding-bottom: 2px; }
    .ctl { width: 69px; display: flex; justify-content: center; }
    .plus { width: 52px; margin-right: 58px; }
    .bar { height: 57px; display: flex; align-items: center; flex: none; }
    .back { margin-left: 28px; }
    .reload { margin: 0 30px 0 42px; }
    .address { width: 1368px; height: 45px; border-radius: 23px; background: #fff; box-shadow: 0 0 5px rgba(0, 0, 0, 0.1); display: flex; align-items: center; padding: 0 8px 0 30px; box-sizing: border-box; margin-right: 8px; flex: none; }
    .url { flex: 1; margin-left: 25px; font-size: 20px; color: #6f6f6f; white-space: nowrap; padding-bottom: 2px; }
    .url b { font-weight: 400; color: #111; }
    .mini { width: 59.500px; display: flex; justify-content: center; }
    .tool { width: 66px; display: flex; justify-content: center; flex: none; }
    .tool:last-child { width: 62px; }
    .body { display: flex; height: 901px; }
    .view { width: 1848px; height: 897px; margin: 0 1px 4px 4px; border-radius: 12px; overflow: hidden; display: flex; background: #e4e4e4; box-shadow: 0 0 2px 1px #dcdcdc; position: relative; }
    .page { width: 1825px; display: flex; flex-direction: column; overflow: hidden; }
    .menu { height: 58px; flex: none; background: #07689f; box-shadow: 0 8px 18px rgba(0, 0, 0, 0.3); z-index: 2; position: relative; display: flex; align-items: center; box-sizing: border-box; padding: 0 0 3px 70px; color: #fff; font: 19.2px/28px "Liberation Sans", Arial, sans-serif; }
    .menu span { margin: 0 19px 0 10px; }
    .dim { color: #83b4cf; }
    .content { display: flex; padding-left: 2px; height: 839px; overflow: hidden; }
    week-timetable, portal-side { height: 839px; flex: none; }
    .scroll { width: 23px; background: #fcfcfc; display: flex; flex-direction: column; align-items: center; }
    .up { margin: 11px 0 0; }
    .thumb { width: 13px; height: 530px; border-radius: 7px; background: #8b8b8b; margin: 109px 1px 212px 0; flex: none; }
    .totop { position: absolute; left: 1760px; top: 839px; width: 53px; height: 57px; border-radius: 10px; background: #bad5e4; display: flex; align-items: center; justify-content: center; z-index: 3; box-sizing: border-box; padding-top: 5px; }
  `;
  render() {
    const g = "#6f6f6f";
    return html`
      <div class="window">
        <div class="strip">
          <div class="tools">
            ${icon(34, 34, svg`<circle cx="17" cy="17" r="16.300" fill="#d4d3d0" stroke="#e4e2dc" stroke-width="1.200"/><circle cx="17" cy="12.500" r="7.300" fill="#8a8785"/><path d="M5 28.500c0-4 5-7 12-7s12 3 12 7a16 16 0 01-24 0z" fill="#8a8785"/>`)}
            ${icon(26, 26, svg`<rect x="11" y="9" width="13.500" height="15.500" rx="2.500" stroke="#1b1b1b" stroke-width="1.700" transform="skewY(-8) translate(0 2)"/>${line("M8 21.500l-1-.5a2.500 2.500 0 01-1.500-2.500V9.500A3 3 0 017.500 7l9-2.500c1.500-.3 2.500.5 3 1.500M3 18l-.7-.6A3 3 0 011.200 15V6.500A3 3 0 013.200 4L11 1.500c1.500-.4 2.700 0 3.200 1", "#1b1b1b", 1.7)}`)}
            ${icon(22, 23, svg`<rect x="1" y="1.500" width="20" height="20" rx="3.500" stroke="#111" stroke-width="1.800"/><path d="M1 7V4a3 3 0 013-3h14a3 3 0 013 3v3z" fill="#111"/><path d="M6.500 7v14" stroke="#111" stroke-width="1.600"/>`)}
          </div>
          ${tabs.map((t) => html`<div class=${classMap({ tab: true, active: !!t.active })}>${favicons[t.icon]}<span class=${classMap({ fade: !!t.fade })}>${t.title}</span>${closeIcon}</div>`)}
          <div class="controls">
            <div class="ctl plus">${icon(21, 21, line("M10.500 .8v19.400M.8 10.500h19.400", "#111", 1.6))}</div>
            <div class="ctl">${icon(16, 16, line("M1 8h14", "#111", 1.3))}</div>
            <div class="ctl">${icon(16, 16, svg`<rect x=".8" y="3" width="12" height="12" rx="2" stroke="#111" stroke-width="1.300"/>${line("M4 .8h8A3 3 0 0115 3.800v8", "#111", 1.3)}`)}</div>
            <div class="ctl">${icon(16, 16, line("M1 1l14 14M15 1L1 15", "#111", 1.3))}</div>
          </div>
        </div>
        <div class="bar">
          <div class="back">${icon(24, 24, line("M23 12H1.500M11.500 1.500L1 12l10.500 10.500", "#1b1b1b", 1.7))}</div>
          <div class="reload">${icon(24, 26, line("M22.800 13A11 11 0 1119 5.500l3.500 2.500M22.500 1.500V8H16", "#1b1b1b", 1.7))}</div>
          <div class="address">
            ${icon(19, 24, svg`<rect x="1" y="8.500" width="16.500" height="13.500" rx="2.500" stroke=${g} stroke-width="1.700"/>${line("M5 8V5.500a4.200 4.200 0 018.400 0V8", g, 1.7)}<circle cx="9.200" cy="15.200" r="1.600" fill=${g}/>`)}
            <div class="url">https://<b>thongtindaotao.sgu.edu.vn</b>/#/tkb-tuan</div>
            <div class="mini">${icon(22, 22, line("M15.800 8.500a7.300 7.300 0 11-14.600 0 7.300 7.300 0 0114.600 0zM13.800 13.800l7 7M5.500 8.500h6", g, 1.6))}</div>
            <div class="mini">${icon(24, 22, line("M1 21L8 4l7 17M3.500 15h9M14.500 3.500c2 1.500 3 3.500 3 6M17.500 1c3 2.200 4.500 5 4.500 8.500", g, 1.6))}</div>
            <div class="mini">${icon(25, 24, line("M12.500 1.500l3.300 7 7.700 1-5.600 5.300 1.400 7.700-6.800-3.700-6.800 3.700 1.400-7.700L1.500 9.500l7.700-1z", g, 1.6))}</div>
          </div>
          <div class="tool">${icon(24, 24, line("M9 3H4a2.500 2.500 0 00-2.500 2.500v12A2.500 2.500 0 004 20h5M15 3h4.500A2.500 2.500 0 0122 5.500v12a2.500 2.500 0 01-2.500 2.500H15M12 1v22", "#1b1b1b", 1.7))}</div>
          <div class="tool">${icon(26, 24, line("M16.500 8.500h-1.700L11 1.500l-3.500 7-6.500 1 4.700 5-1.200 7.500 6-3.200M16 8.500h9M16 14h9M16 19.500h9", "#1b1b1b", 1.7))}</div>
          <div class="tool">${icon(25, 25, line("M4 16.500c-1 0-1.800-.7-2-1.600L1 5.500A2.500 2.500 0 013 2.700l9.500-1.500a2.500 2.500 0 012.800 2l.3 1.500M11 8h10.500A2.500 2.500 0 0124 10.500v11a2.500 2.500 0 01-2.500 2.500H11a2.500 2.500 0 01-2.500-2.500v-11A2.500 2.500 0 0111 8zM16.200 11.500v9M11.700 16h9", "#1b1b1b", 1.7))}</div>
          <div class="tool">${icon(25, 26, heart)}</div>
          <div class="tool">${icon(22, 6, svg`<g fill="#1b1b1b"><circle cx="3" cy="3" r="1.900"/><circle cx="11" cy="3" r="1.900"/><circle cx="19" cy="3" r="1.900"/></g>`)}</div>
          <div class="tool">${icon(36, 34, svg`<defs><linearGradient id="c1" x1="0" x2="0" y1="0" y2="1"><stop stop-color="#17a5e6"/><stop offset=".6" stop-color="#27c2b4"/><stop offset="1" stop-color="#6ddb8b"/></linearGradient><linearGradient id="c2" x1="0" x2="0" y1="0" y2="1"><stop stop-color="#1d8fe6"/><stop offset="1" stop-color="#22a8ff"/></linearGradient></defs><path d="M18 11h12l-2-6c-1-3-2-4-5-4h-8z" fill="#0a4c9c"/><path d="M24 33H14c-3 0-4-2-4.500-4l-1-3c3 0 4.500-1 5.500-4l3-10c.5-1 1.500-1.500 3-1.500h11c4 0 5 3 4 7L30.500 28c-1 3-2.500 5-6.500 5z" fill="url(#c2)"/><path d="M14 33c-3 0-4-2-4.500-4l-1-3h10l1.500 2c-1 3-3 5-6 5z" fill="#1252d4"/><path d="M11 1h12c-3 0-4 2-5 5l-4 15c-1 3-3 5-6 5H5c-4 0-5-3-4-7L4.500 6C5.500 3 7 1 11 1z" fill="url(#c1)"/><path d="M19 11.500h2.500L18 23h-4.500z" fill="#fff"/>`)}</div>
        </div>
        <div class="body">
          <div class="view">
            <div class="page">
              <div class="menu">
                ${icon(22, 20, svg`<path d="M11 0l11 10.500h-2.800V20h-5.700v-6.500h-5V20H2.800v-9.500H0z" fill="#fff"/>`)}<span>Trang chủ</span>
                ${icon(19, 20, svg`<path d="M17 .5v18L11 14H9l1.500 4.500-4 1L4.800 14H3a3 3 0 01-3-3V8.500a3 3 0 013-3h8zM14.500 4.500l-3 2.200v6l3 2.200z" fill="#83b4cf" fill-rule="evenodd"/><path d="M17.500 7.500v4c2-.5 2-3.500 0-4z" fill="#83b4cf"/>`)}<span class="dim">Thông báo</span>
                ${icon(17, 20, svg`<circle cx="8.500" cy="5" r="5" fill="#83b4cf"/><path d="M0 20v-3.500a5 5 0 015-5h7a5 5 0 015 5V20z" fill="#83b4cf"/>`)}<span class="dim">Thông tin</span>
              </div>
              <div class="content"><week-timetable></week-timetable><portal-side></portal-side></div>
            </div>
            <div class="scroll">
              <div class="up">${icon(16, 12, svg`<path d="M8 1l7 10H1z" fill="#8b8b8b" stroke="#8b8b8b" stroke-linejoin="round"/>`)}</div>
              <div class="thumb"></div>
              ${icon(16, 12, svg`<path d="M8 11L1 1h14z" fill="#8b8b8b" stroke="#8b8b8b" stroke-linejoin="round"/>`)}
            </div>
            <div class="totop">${icon(16, 18, svg`<path d="M8 17V2M1.500 8.500L8 2l6.500 6.500" stroke="#fff" stroke-width="2.400"/>`)}</div>
          </div>
          <edge-rail></edge-rail>
        </div>
      </div>
      <task-bar></task-bar>`;
  }
}
